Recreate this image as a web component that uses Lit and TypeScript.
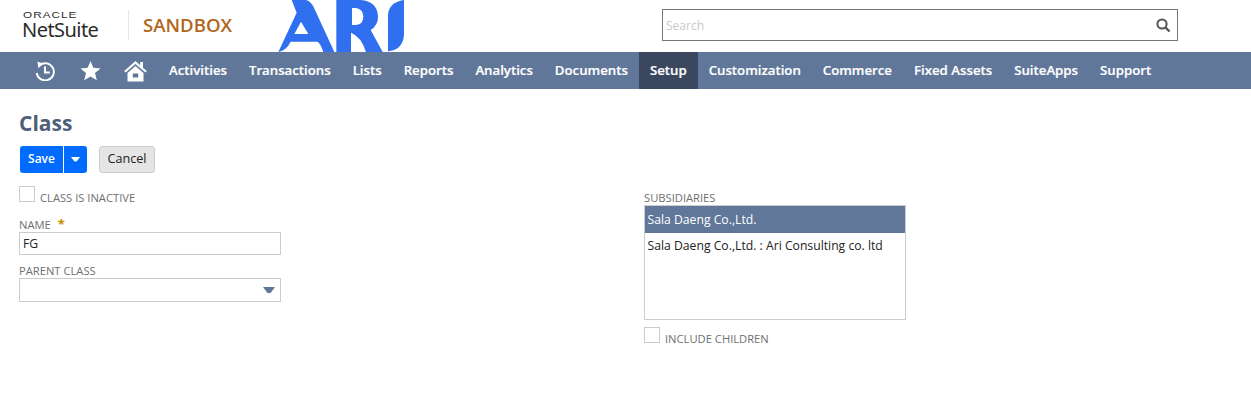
import { LitElement, html, css } from "lit";
import { customElement } from "lit/decorators.js";

const NAV = ["Activities","Transactions","Lists","Reports","Analytics","Documents","Setup","Customization","Commerce","Fixed Assets","SuiteApps","Support"];

@customElement("app-root")
export class AppRoot extends LitElement {
  static styles = css`
    :host { display: block; width: 1251px; height: 403px; background: #fff; font-family: "Open Sans", sans-serif; overflow: hidden; }
    * { box-sizing: border-box; }
    .top { height: 52px; display: flex; align-items: flex-start; }
    .ns { margin: 11px 0 0 22px; width: 77px; color: #2b2b2b; display: flex; flex-direction: column; }
    .oracle { font-size: 8.5px; line-height: 8px; letter-spacing: .75px; font-weight: 400; font-family: "Liberation Sans", sans-serif; margin: 0 0 1px 1px; transform: scaleX(1.38); transform-origin: left; }
    .netsuite { font-size: 20px; line-height: 20px; letter-spacing: -.55px; font-family: "Noto Sans", sans-serif; }
    .div { width: 1px; height: 30px; background: #e6e6e6; margin: 10px 14px 0 29px; }
    .sandbox { font-size: 18.6px; line-height: 24px; font-weight: 600; color: #b2661c; margin-top: 13px; width: 127px; }
    .ari { width: 145px; height: 52px; display: block; flex: none; }
    .search { margin: 9px 0 0 247px; width: 516px; height: 32px; border: 1px solid #777; display: flex; align-items: center; justify-content: space-between; padding: 0 6px 0 3px; font-size: 12px; color: #c8c8c8; }
    .nav { height: 37px; background: #607799; display: flex; align-items: stretch; }
    .icons { width: 158px; display: flex; align-items: center; flex: none; }
    .icons svg { display: block; flex: none; }
    .i1 { margin-left: 35px; } .i2 { margin-left: 25px; } .i3 { margin-left: 23px; }
    .item { padding: 0 11px; font-size: 13.22px; font-weight: 600; color: #fff; line-height: 37px; -webkit-text-stroke: .2px #fff; }
    .item.on { background: #3b475e; }
    .page { padding: 0 0 0 19px; }
    h1 { margin: 21px 0 0; font-size: 21px; line-height: 27px; font-weight: 700; color: #4d5f79; }
    .btns { display: flex; margin: 9px 0 0 1px; height: 27px; }
    .save { display: flex; background: #006cff; border-radius: 3px; color: #fff; font-size: 12px; font-weight: 600; line-height: 25px; height: 27px; width: 67px; }
    .save span { width: 44px; text-align: center; border-right: 1px solid #fff; }
    .save i { flex: 1; display: flex; align-items: center; justify-content: center; }
    .cancel { margin-left: 12px; width: 56px; height: 27px; background: #e5e5e5; border: 1px solid #ccc; border-radius: 3px; font-size: 12.6px; font-weight: 400; color: #222; text-align: center; line-height: 24px; }
    .cols { display: flex; }
    .left { width: 625px; flex: none; }
    .right { width: 262px; }
    .check { display: flex; align-items: flex-end; gap: 5px; height: 16px; }
    .box { width: 16px; height: 16px; border: 1px solid #ccc; flex: none; }
    label, .lab { font-size: 11.2px; line-height: 13px; color: #6f6f6f; display: block; }
    .check .lab { margin-bottom: -2px; }
    .left .check { margin-top: 13px; }
    .star { color: #c98a00; font-size: 13px; font-weight: 700; margin-left: 4px; }
    .n { margin-top: 16px; }
    .in { width: 262px; height: 23px; border: 1px solid #ccc; font-size: 12.2px; line-height: 21px; color: #222; padding-left: 3px; margin-top: 1px; }
    .p { margin-top: 9px; }
    .sel { width: 262px; height: 24px; border: 1px solid #ccc; margin-top: 1px; display: flex; align-items: center; justify-content: flex-end; padding-right: 5px; }
    .right .sub { margin-top: 18px; }
    .list { width: 262px; height: 115px; border: 1px solid #ccc; margin-top: 1px; font-size: 12.2px; color: #222; }
    .opt { height: 27px; line-height: 27px; padding-left: 2.5px; }
    .opt.on { background: #607799; color: #fff; }
    .opt + .opt { height: 26px; line-height: 25px; }
    .right .check { margin-top: 7px; }
  `;

  render() {
    return html`
      <div class="top">
        <div class="ns"><span class="oracle">ORACLE</span><span class="netsuite">NetSuite</span></div>
        <div class="div"></div>
        <div class="sandbox">SANDBOX</div>
        <svg class="ari" viewBox="0 0 435 156" role="img" aria-label="ARI logo">
          <path fill="#2f6ff0" fill-rule="evenodd" d="M25 156 L80 38 Q72 18 65 0 H108 Q125 4 135 30 L193 156 H160 Q152 130 142 125 H62 Q50 150 25 156 Z M93 65 L73 102 H115 Z"/>
          <path fill="#2f6ff0" fill-rule="evenodd" d="M199 0 H272 Q322 4 324 50 Q324 76 302 90 L338 156 H288 Q274 110 243 98 V156 H199 Z M246 24 V75 H258 Q280 72 280 50 Q280 28 258 24 Z"/>
          <path fill="#2f6ff0" d="M401 0 Q356 8 354 45 V154 Q398 150 402 105 V0 Z"/>
        </svg>
        <div class="search">
          <span>Search</span>
          <svg width="16" height="16" viewBox="0 0 16 16"><circle cx="7" cy="7" r="4.6" fill="none" stroke="#555" stroke-width="2"/><path d="M10.5 10.5 L14.5 14.5" stroke="#555" stroke-width="2.4"/></svg>
        </div>
      </div>
      <div class="nav">
        <div class="icons">
          <svg class="i1" width="20" height="21" viewBox="0 0 20 21"><path d="M4.6 5.3 A8.6 8.6 0 1 1 1.7 13" fill="none" stroke="#fff" stroke-width="1.9"/><path d="M2.4 1.8 L8.4 3.4 L3.4 8.2 Z" fill="#fff"/><path d="M10 6.5 V12.4 H14.8" fill="none" stroke="#fff" stroke-width="2"/></svg>
          <svg class="i2" width="21" height="20" viewBox="0 0 21 20"><path fill="#fff" d="M10.5 0 L13.3 6.8 L20.6 7.4 L15 12.1 L16.8 19.3 L10.5 15.4 L4.2 19.3 L6 12.1 L.4 7.4 L7.7 6.8 Z"/></svg>
          <svg class="i3" width="23" height="22" viewBox="0 0 23 22"><path fill="#fff" d="M11.5 1 L16.2 5.2 V2 H19 V7.7 L22.8 11 L21.4 12.6 L11.5 3.9 L1.6 12.6 L.2 11 Z"/><path fill="#fff" fill-rule="evenodd" d="M11.5 6 L19.5 13 V21.5 H3.5 V13 Z M8.8 13.5 V17.5 H14.2 V13.5 Z"/></svg>
        </div>
        ${NAV.map(n => html`<div class="item ${n === "Setup" ? "on" : ""}">${n}</div>`)}
      </div>
      <div class="page">
        <h1>Class</h1>
        <div class="btns">
          <div class="save"><span>Save</span><i><svg width="9" height="5" viewBox="0 0 9 5"><path fill="#fff" d="M0 0 H9 L6 4 Q4.5 5 3 4 Z"/></svg></i></div>
          <div class="cancel">Cancel</div>
        </div>
        <div class="cols">
          <div class="left">
            <div class="check"><div class="box"></div><span class="lab">CLASS IS INACTIVE</span></div>
            <div class="n"><label>NAME <span class="star">*</span></label><div class="in">FG</div></div>
            <div class="p"><label>PARENT CLASS</label>
              <div class="sel"><svg width="12" height="7" viewBox="0 0 12 7"><path fill="#607799" d="M0 0 H12 L8 5.5 Q6 7 4 5.5 Z"/></svg></div>
            </div>
          </div>
          <div class="right">
            <label class="sub">SUBSIDIARIES</label>
            <div class="list">
              <div class="opt on">Sala Daeng Co.,Ltd.</div>
              <div class="opt">Sala Daeng Co.,Ltd. : Ari Consulting co. ltd</div>
            </div>
            <div class="check"><div class="box"></div><span class="lab">INCLUDE CHILDREN</span></div>
          </div>
        </div>
      </div>
    `;
  }
}
